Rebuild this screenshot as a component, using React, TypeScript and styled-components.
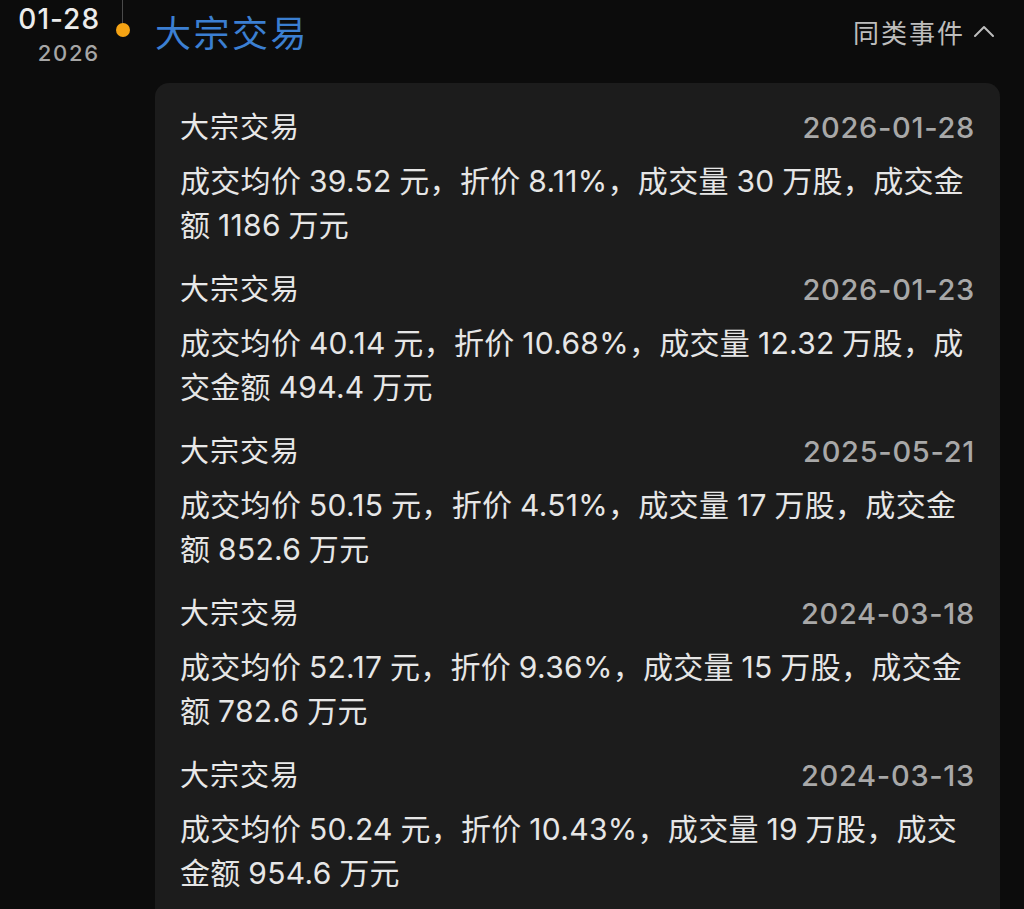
import React from 'react';
import styled, { createGlobalStyle } from 'styled-components';

const GlobalStyle = createGlobalStyle`
  html, body {
    margin: 0;
    padding: 0;
    background: #0c0c0c;
  }
  body {
    font-family: Inter, 'Noto Sans CJK SC', sans-serif;
    -webkit-font-smoothing: antialiased;
  }
`;

interface Deal {
  date: string;
  text: string;
}

const deals: Deal[] = [
  { date: '2026-01-28', text: '成交均价 39.52 元，折价 8.11%，成交量 30 万股，成交金额 1186 万元' },
  { date: '2026-01-23', text: '成交均价 40.14 元，折价 10.68%，成交量 12.32 万股，成交金额 494.4 万元' },
  { date: '2025-05-21', text: '成交均价 50.15 元，折价 4.51%，成交量 17 万股，成交金额 852.6 万元' },
  { date: '2024-03-18', text: '成交均价 52.17 元，折价 9.36%，成交量 15 万股，成交金额 782.6 万元' },
  { date: '2024-03-13', text: '成交均价 50.24 元，折价 10.43%，成交量 19 万股，成交金额 954.6 万元' },
];

const Page = styled.div`
  display: grid;
  grid-template-columns: 100px 55px 1fr;
  padding-right: 24px;
  min-height: 909px;
  overflow: hidden;
`;

const DateCol = styled.div`
  display: flex;
  flex-direction: column;
  align-items: flex-end;
  padding-top: 2px;
`;

const Day = styled.div`
  font-size: 28px;
  font-weight: 500;
  line-height: 34px;
  color: #ececec;
  letter-spacing: 1px;
`;

const Year = styled.div`
  font-size: 22px;
  font-weight: 500;
  line-height: 34px;
  color: #a6a6a6;
  letter-spacing: 1.8px;
`;

const Rail = styled.div`
  position: relative;
  display: flex;
  justify-content: flex-start;
  padding-left: 16px;
`;

const RailLine = styled.div`
  width: 1px;
  height: 24px;
  margin-left: 6px;
  background: #4a4a4a;
`;

const Dot = styled.span`
  position: absolute;
  left: 16px;
  top: 23px;
  width: 14px;
  height: 14px;
  border-radius: 50%;
  background: #f5a314;
`;

const Main = styled.div`
  display: flex;
  flex-direction: column;
`;

const Header = styled.div`
  display: flex;
  align-items: center;
  justify-content: space-between;
  height: 62px;
  padding-bottom: 21px;
`;

const Title = styled.h1`
  margin: 0;
  font-size: 36px;
  font-weight: 400;
  color: #3b7fd2;
  letter-spacing: 2.5px;
`;

const Similar = styled.button`
  display: flex;
  align-items: center;
  gap: 8px;
  padding: 0;
  margin-right: 5px;
  border: none;
  background: none;
  font-family: inherit;
  font-size: 26px;
  color: #bdbdbd;
  letter-spacing: 2px;
`;

const Card = styled.div`
  background: #1c1c1c;
  border-radius: 14px 14px 0 0;
  padding: 23px 25px 16px 25px;
  display: flex;
  flex-direction: column;
  gap: 21px;
`;

const Item = styled.div`
  display: flex;
  flex-direction: column;
  gap: 9px;
`;

const ItemHead = styled.div`
  display: flex;
  justify-content: space-between;
  align-items: center;
  line-height: 44px;
`;

const ItemTitle = styled.span`
  font-size: 29px;
  color: #e8e8e8;
  letter-spacing: 1px;
`;

const ItemDate = styled.span`
  font-size: 29px;
  font-weight: 500;
  color: #a8a8a8;
  letter-spacing: 0.7px;
`;

const ItemBody = styled.p`
  margin: 0;
  font-size: 30px;
  line-height: 44px;
  color: #e6e6e6;
  letter-spacing: 0.3px;
  word-spacing: -1px;
`;

const Chevron = () => (
  <svg width="22" height="14" viewBox="0 0 22 14" fill="none">
    <polyline points="2,12 11,3 20,12" stroke="#bdbdbd" strokeWidth="2" strokeLinecap="round" strokeLinejoin="round" />
  </svg>
);

export default function App() {
  return (
    <>
      <GlobalStyle />
      <Page>
        <DateCol>
          <Day>01-28</Day>
          <Year>2026</Year>
        </DateCol>
        <Rail>
          <RailLine />
          <Dot />
        </Rail>
        <Main>
          <Header>
            <Title>大宗交易</Title>
            <Similar>
              同类事件
              <Chevron />
            </Similar>
          </Header>
          <Card>
            {deals.map((d) => (
              <Item key={d.date}>
                <ItemHead>
                  <ItemTitle>大宗交易</ItemTitle>
                  <ItemDate>{d.date}</ItemDate>
                </ItemHead>
                <ItemBody>{d.text}</ItemBody>
              </Item>
            ))}
          </Card>
        </Main>
      </Page>
    </>
  );
}
